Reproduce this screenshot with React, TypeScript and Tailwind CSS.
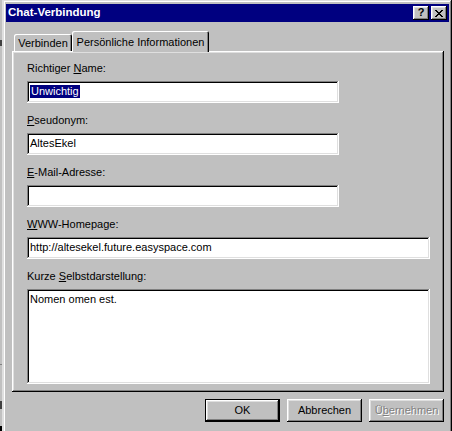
import React from 'react'

const raised =
  'shadow-[inset_-1px_-1px_#000,inset_1px_1px_#fff,inset_-2px_-2px_#808080,inset_2px_2px_#dfdfdf]'
const sunken =
  'shadow-[inset_-1px_-1px_#fff,inset_1px_1px_#808080,inset_-2px_-2px_#dfdfdf,inset_2px_2px_#000]'

function Field({
  label,
  width,
  children,
}: {
  label: React.ReactNode
  width: string
  children?: React.ReactNode
}) {
  return (
    <div className="flex flex-col">
      <div className="h-[13px] leading-[13px] mb-[6px]">{label}</div>
      <div className={`${width} h-[22px] bg-white ${sunken} flex items-center pl-[3px] pb-[1px] leading-[13px] whitespace-nowrap`}>
        {children}
      </div>
    </div>
  )
}

function Button({ children, isDefault }: { children: React.ReactNode; isDefault?: boolean }) {
  return (
    <div
      className={`w-[75px] h-[23px] flex items-center justify-center bg-[#c0c0c0] ${
        isDefault
          ? 'shadow-[inset_0_0_0_1px_#000,inset_-2px_-2px_#000,inset_2px_2px_#fff,inset_-3px_-3px_#808080,inset_3px_3px_#dfdfdf]'
          : raised
      }`}
    >
      {children}
    </div>
  )
}

export default function App() {
  return (
    <div className="flex w-[452px] h-[431px] overflow-hidden bg-[#c0c0c0] font-['Liberation_Sans',Arial,sans-serif] text-[11px] text-black">
      {/* sliver of the window behind */}
      <div className="w-[3px] shrink-0 flex flex-col bg-[#c0c0c0] border-r border-[#dfdfdf]">
        <div className="h-[40px]" />
        <div className="h-[6px] bg-[#404040] w-[2px]" />
        <div className="h-[318px]" />
        <div className="h-px bg-[#808080]" />
        <div className="h-[36px]" />
        <div className="h-[8px] bg-[#404040] w-[2px]" />
        <div className="flex-1" />
        <div className="h-[5px] bg-black" />
      </div>

      <div className={`w-[449px] h-[436px] shrink-0 flex flex-col bg-[#c0c0c0] pt-[4px] px-[3px] shadow-[inset_-1px_-1px_#000,inset_1px_1px_#dfdfdf,inset_-2px_-2px_#808080,inset_2px_2px_#fff]`}>
        {/* title bar */}
        <div className="h-[18px] bg-[#000080] flex items-center pl-[2px] pr-[2px]">
          <span className="text-white font-bold text-[11.5px] leading-none">Chat-Verbindung</span>
          <div className="ml-auto flex gap-[2px]">
            <div className={`w-[16px] h-[14px] bg-[#c0c0c0] ${raised} flex items-center justify-center font-bold text-[11px] leading-none pb-[1px]`}>
              ?
            </div>
            <div className={`w-[16px] h-[14px] bg-[#c0c0c0] ${raised} flex items-center justify-center`}>
              <svg width="8" height="7" viewBox="0 0 8 7" shapeRendering="crispEdges">
                <path d="M0 0h2v1h1v1h2v-1h1v-1h2v1h-1v1h-1v1h-1v1h1v1h1v1h1v1h-2v-1h-1v-1h-2v1h-1v1h-2v-1h1v-1h1v-1h1v-1h-1v-1h-1v-1h-1z" fill="#000" />
              </svg>
            </div>
          </div>
        </div>

        {/* tabs */}
        <div className="mt-[9px] ml-[6px] h-[20px] flex items-end pl-[2px] relative z-10">
          <div className="w-[58px] h-[17px] flex items-center justify-center pt-[1px] rounded-t-[2px] shadow-[inset_1px_1px_#fff,inset_-1px_0_#000,inset_-2px_0_#808080]">
            Verbinden
          </div>
          <div className="w-[137px] h-[21px] -mb-px bg-[#c0c0c0] flex items-start justify-center pt-[3px] rounded-t-[2px] shadow-[inset_1px_1px_#fff,inset_-1px_0_#000,inset_-2px_0_#808080]">
            Persönliche Informationen
          </div>
        </div>

        {/* panel */}
        <div className={`ml-[6px] w-[432px] h-[341px] ${raised} pt-[11px] pl-[15px] flex flex-col gap-[11px]`}>
          <Field
            width="w-[312px]"
            label={
              <>
                Richtiger <u>N</u>ame:
              </>
            }
          >
            <span className="bg-[#000080] text-white leading-[13px] pl-px pr-px">Unwichtig</span>
          </Field>
          <Field
            width="w-[312px]"
            label={
              <>
                <u>P</u>seudonym:
              </>
            }
          >
            AltesEkel
          </Field>
          <Field
            width="w-[312px]"
            label={
              <>
                <u>E</u>-Mail-Adresse:
              </>
            }
          />
          <Field
            width="w-[403px]"
            label={
              <>
                <u>W</u>WW-Homepage:
              </>
            }
          >
            http://altesekel.future.easyspace.com
          </Field>
          <div className="flex flex-col">
            <div className="h-[13px] leading-[13px] mb-[6px]">
              Kurze <u>S</u>elbstdarstellung:
            </div>
            <div className={`w-[403px] h-[95px] bg-white ${sunken} pt-[4px] pl-[3px] leading-[13px]`}>
              Nomen omen est.
            </div>
          </div>
        </div>

        {/* buttons */}
        <div className="ml-[6px] w-[432px] mt-[7px] flex justify-end gap-[7px]">
          <Button isDefault>OK</Button>
          <Button>Abbrechen</Button>
          <Button>
            <span className="text-[#808080] [text-shadow:1px_1px_0_#fff]">
              Ü<u>b</u>ernehmen
            </span>
          </Button>
        </div>
      </div>
    </div>
  )
}
